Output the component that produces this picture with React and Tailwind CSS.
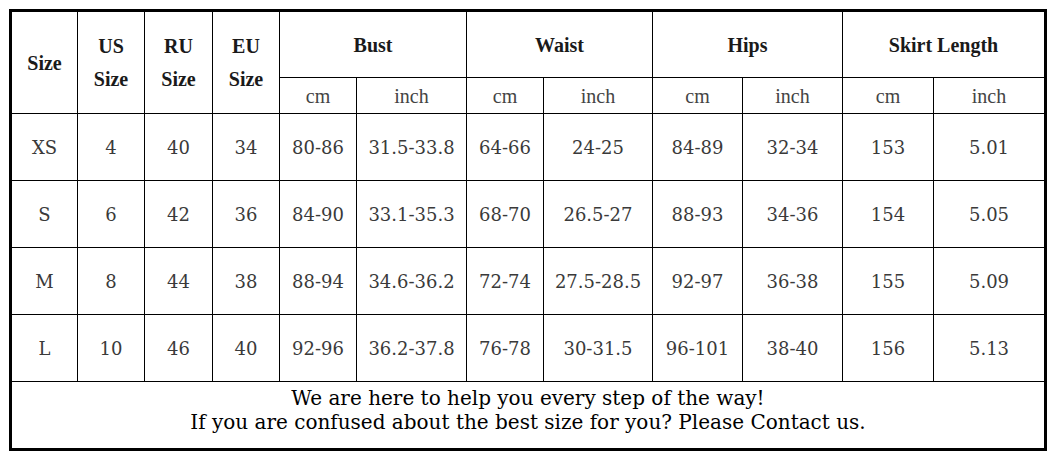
const rows = [
  ["XS", "4", "40", "34", "80-86", "31.5-33.8", "64-66", "24-25", "84-89", "32-34", "153", "5.01"],
  ["S", "6", "42", "36", "84-90", "33.1-35.3", "68-70", "26.5-27", "88-93", "34-36", "154", "5.05"],
  ["M", "8", "44", "38", "88-94", "34.6-36.2", "72-74", "27.5-28.5", "92-97", "36-38", "155", "5.09"],
  ["L", "10", "46", "40", "92-96", "36.2-37.8", "76-78", "30-31.5", "96-101", "38-40", "156", "5.13"],
];

const head = "bg-white flex items-center justify-center text-center font-['Liberation_Serif',serif] font-bold text-[20px] text-[#1a1a1a]";
const sub = "bg-white flex items-center justify-center font-['Liberation_Serif',serif] text-[20px] text-[#444]";
const cell = "bg-white flex items-center justify-center font-['DejaVu_Serif',serif] text-[18px] text-[#3a3a3a]";

export default function App() {
  return (
    <div className="bg-white w-[1054px] h-[454px] pt-[9px] pl-[9px]">
      <div className="w-[1038px] border-[3px] border-black">
        <div className="grid gap-px bg-black grid-cols-[65px_66px_67px_66px_76px_109px_76px_108px_89px_99px_90px_110px] grid-rows-[65px_35px_66px_66px_66px_66px_66px]">
          <div className={`${head} row-span-2`}>Size</div>
          <div className={`${head} row-span-2 leading-[33px]`}>US<br />Size</div>
          <div className={`${head} row-span-2 leading-[33px]`}>RU<br />Size</div>
          <div className={`${head} row-span-2 leading-[33px]`}>EU<br />Size</div>
          <div className={`${head} col-span-2`}>Bust</div>
          <div className={`${head} col-span-2`}>Waist</div>
          <div className={`${head} col-span-2`}>Hips</div>
          <div className={`${head} col-span-2`}>Skirt Length</div>
          {[0, 1, 2, 3].map((i) => [
            <div key={`c${i}`} className={sub}>cm</div>,
            <div key={`i${i}`} className={sub}>inch</div>,
          ])}
          {rows.map((r) =>
            r.map((v, j) => (
              <div key={`${r[0]}-${j}`} className={cell}>
                {v}
              </div>
            ))
          )}
          <div className="col-span-12 bg-white flex flex-col items-center pt-[4px] font-['DejaVu_Serif',serif] text-[20px] leading-[24px] text-black">
            <p>We are here to help you every step of the way!</p>
            <p>If you are confused about the best size for you? Please Contact us.</p>
          </div>
        </div>
      </div>
    </div>
  );
}
